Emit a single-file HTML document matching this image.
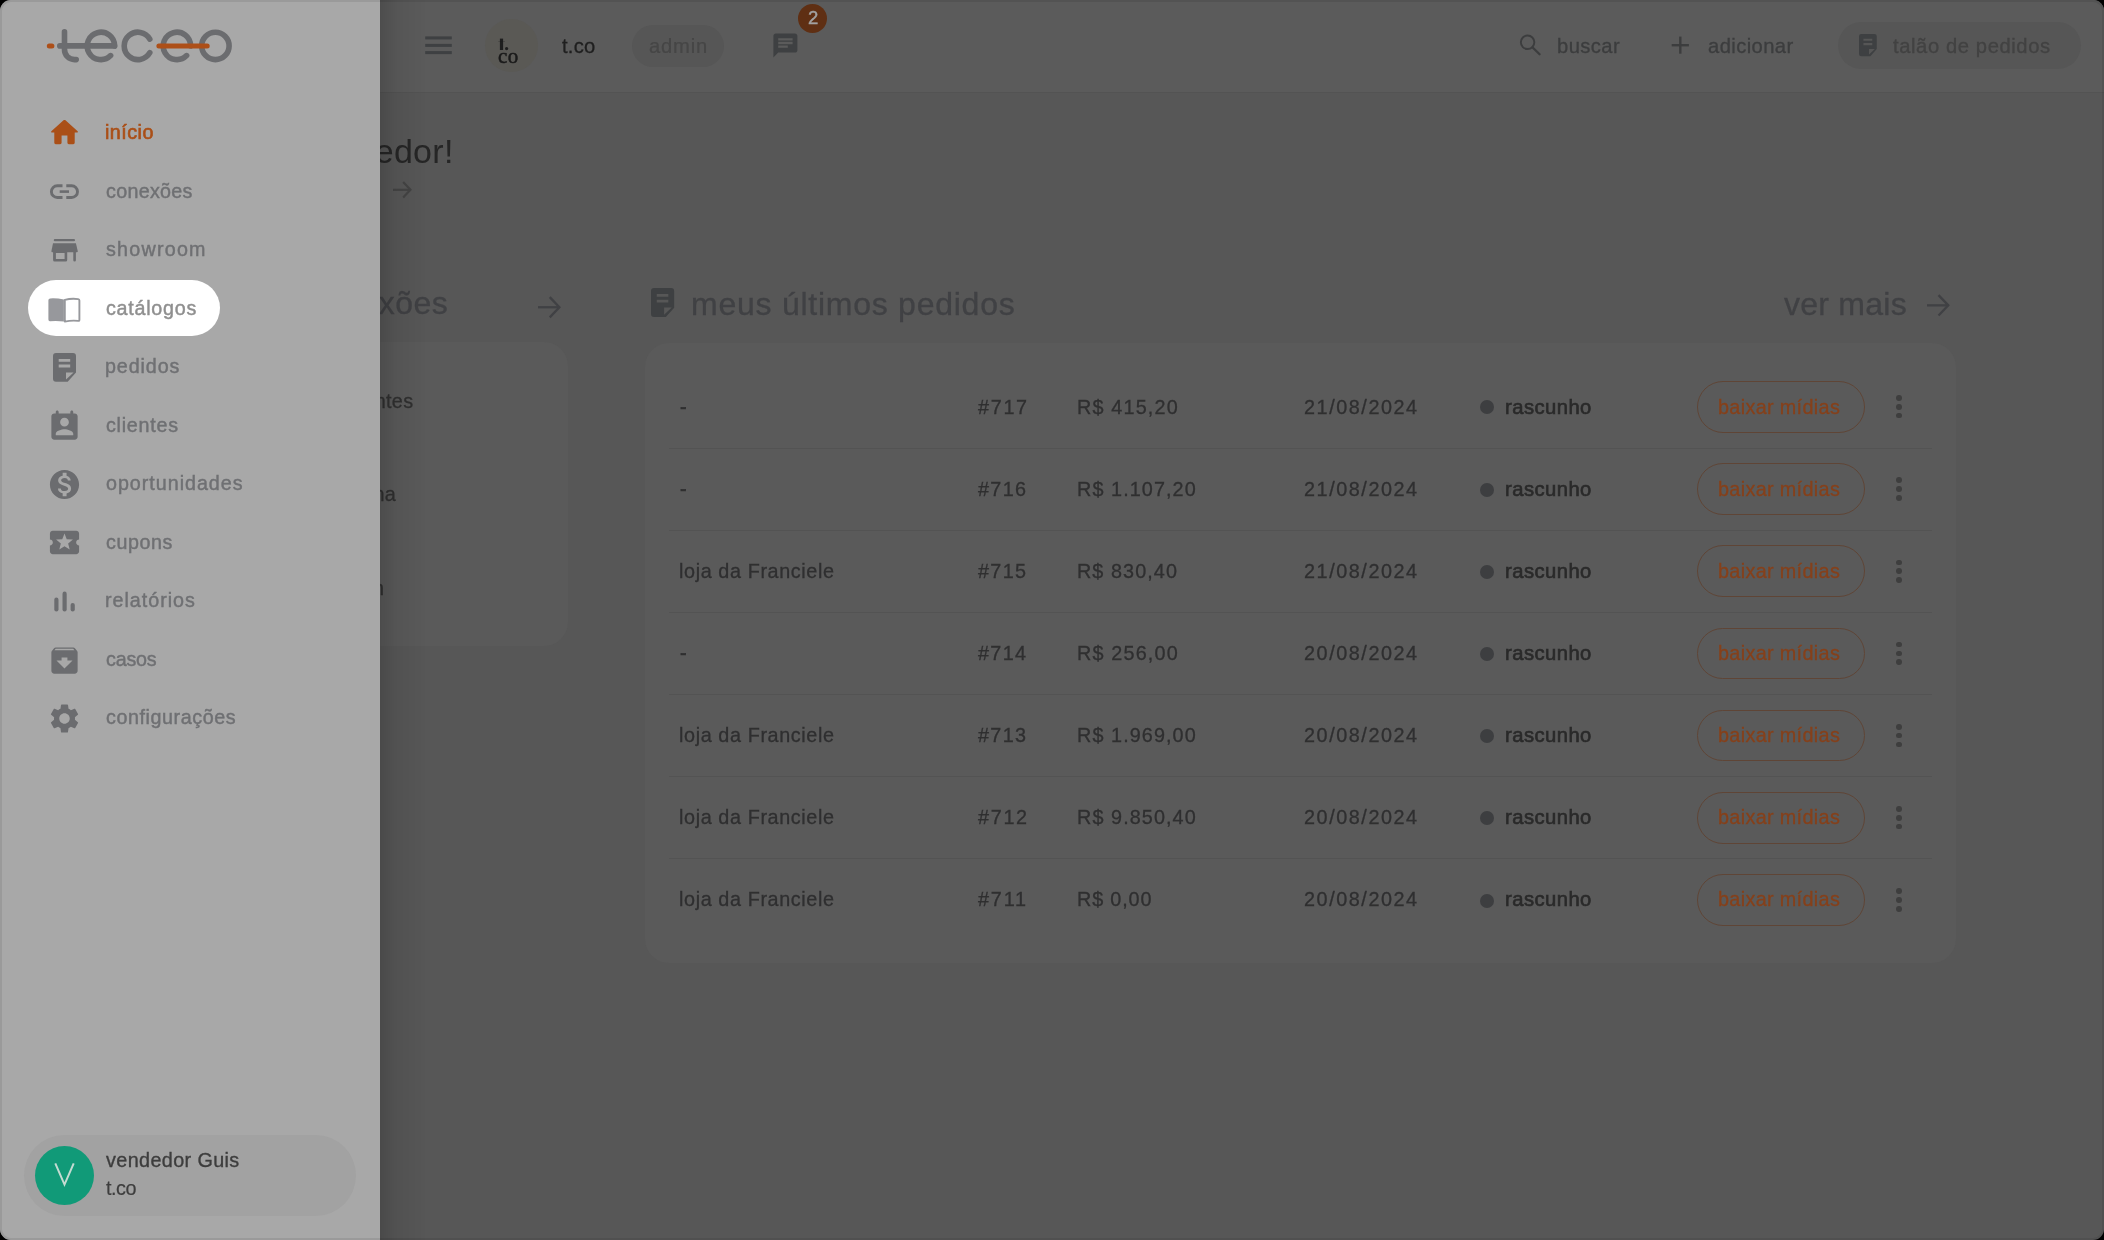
<!DOCTYPE html>
<html><head><meta charset="utf-8"><title>teceo</title>
<style>
*{box-sizing:border-box;margin:0;padding:0}
html,body{width:2104px;height:1240px;overflow:hidden;background:#000;font-family:"Liberation Sans",sans-serif}
#win{position:absolute;left:0;top:0;width:2104px;height:1240px;border-radius:11px;overflow:hidden;background:#575757}
.t{position:absolute;white-space:nowrap;will-change:transform}
.ic{position:absolute;display:block;overflow:visible}
#side{position:absolute;left:0;top:0;width:380px;height:1240px;background:#a8a8a8;z-index:5}
#shadow{position:absolute;left:380px;top:0;width:46px;height:1240px;background:linear-gradient(to right,rgba(0,0,0,.15),rgba(0,0,0,.06) 35%,rgba(0,0,0,0));z-index:4}
#sideC{position:absolute;left:0;top:0;width:380px;height:1240px;z-index:8}
#spot{position:absolute;left:28px;top:280px;width:192px;height:56px;border-radius:28px;background:#fff}
#user{position:absolute;left:23.5px;top:1134.7px;width:332.5px;height:81.8px;border-radius:41px;background:#a2a2a2}
#av{position:absolute;left:35px;top:1146px;width:59px;height:59px;border-radius:50%;background:#119a78}
#hdr{position:absolute;left:380px;top:0;width:1724px;height:93px;background:#5b5b5b;border-bottom:1px solid #535353}
.chip{position:absolute;background:#565656}
#avatar{position:absolute;left:485.1px;top:18.6px;width:53.4px;height:53.4px;border-radius:50%;background:#5a5955}
#badge{position:absolute;left:797.8px;top:4.2px;width:29.2px;height:29.2px;border-radius:50%;background:#5f2f13}
.card{position:absolute;background:#5a5a5a;border-radius:24px}
.dot{position:absolute;width:14px;height:14px;border-radius:50%;background:#3d3e40}
.btn{position:absolute;left:1696.5px;width:168.1px;height:51.7px;border:1.3px solid #5f4536;border-radius:26px}
.mv{position:absolute;width:5.8px;height:5.8px;border-radius:50%;background:#3e3e3e}
.div{position:absolute;left:669px;width:1263px;height:1px;background:#535353}
#wb{position:absolute;left:0;top:0;width:2104px;height:1240px;border-radius:11px;border:2px solid rgba(0,0,0,.08);z-index:50;pointer-events:none}
</style></head><body>
<div id="win">
<div id="hdr"></div>
<div class="chip" style="left:631.5px;top:24.6px;width:92.5px;height:42.4px;border-radius:21.2px"></div>
<div class="chip" style="left:1837.5px;top:21.9px;width:243px;height:46.8px;border-radius:23.4px"></div>
<div id="avatar"></div>
<div id="badge"></div>
<svg class="ic" style="left:425px;top:36px;width:27px;height:19px" viewBox="425 36 27 19"><g fill="#3e4042"><rect x="425.2" y="36.4" width="26.6" height="3"/><rect x="425.2" y="43.9" width="26.6" height="3"/><rect x="425.2" y="51.1" width="26.6" height="3"/></g></svg><svg class="ic" style="left:495px;top:36px;width:15px;height:16px" viewBox="495 36 15 16"><g fill="#1e1e1e"><rect x="499.9" y="38.6" width="3.2" height="11.4"/><rect x="498.2" y="41.3" width="6.8" height="0.7" opacity=".35"/><circle cx="506.6" cy="48.6" r="1.6"/></g></svg><svg class="ic" style="left:771.40px;top:30.90px;width:28.8px;height:28.8px" viewBox="0 0 24 24"><path fill="#3e4042" d="M20 2H4c-1.1 0-1.99.9-1.99 2L2 22l4-4h14c1.1 0 2-.9 2-2V4c0-1.1-.9-2-2-2zM6 9h12v2H6V9zm8 5H6v-2h8v2zm4-6H6V6h12v2z"/></svg><svg class="ic" style="left:1515px;top:30px;width:30px;height:30px" viewBox="1515 30 30 30"><g fill="none" stroke="#3c3d3e"><circle cx="1527.6" cy="42.3" r="6.75" stroke-width="1.9"/><path d="M1532.4 47.3L1539.6 54.3" stroke-width="2.3" stroke-linecap="round"/></g></svg><svg class="ic" style="left:1668px;top:33px;width:25px;height:25px" viewBox="1668 33 25 25"><g fill="#3c3d3e"><rect x="1671.7" y="44.0" width="17.2" height="2.4"/><rect x="1679.1" y="36.6" width="2.4" height="17.1"/></g></svg><svg class="ic" style="left:1859.00px;top:34.30px;width:17.76px;height:22.23px" viewBox="0 0 23 28.8"><path fill="#3e4042" fill-rule="evenodd" d="M3 0H20Q23 0 23 3V19.5L14.7 28.8H3Q0 28.8 0 25.8V3Q0 0 3 0Z M13 19.4H20.6L13 26.5Z M5.7 6H17.2V8.8H5.7Z M5.7 11.6H17.2V14.5H5.7Z"/></svg>
<div class="card" style="left:200px;top:342.3px;width:367.5px;height:304.1px"></div>
<div class="card" style="left:644.5px;top:342.8px;width:1311.3px;height:620px"></div>
<div class="dot" style="left:1479.7px;top:400.3px"></div><div class="btn" style="top:381.0px"></div><div class="mv" style="left:1895.9px;top:395.1px"></div><div class="mv" style="left:1895.9px;top:403.9px"></div><div class="mv" style="left:1895.9px;top:412.7px"></div><div class="div" style="top:448px"></div><div class="dot" style="left:1479.7px;top:482.5px"></div><div class="btn" style="top:463.2px"></div><div class="mv" style="left:1895.9px;top:477.3px"></div><div class="mv" style="left:1895.9px;top:486.1px"></div><div class="mv" style="left:1895.9px;top:494.9px"></div><div class="div" style="top:530px"></div><div class="dot" style="left:1479.7px;top:564.7px"></div><div class="btn" style="top:545.4px"></div><div class="mv" style="left:1895.9px;top:559.5px"></div><div class="mv" style="left:1895.9px;top:568.3px"></div><div class="mv" style="left:1895.9px;top:577.1px"></div><div class="div" style="top:612px"></div><div class="dot" style="left:1479.7px;top:646.9px"></div><div class="btn" style="top:627.6px"></div><div class="mv" style="left:1895.9px;top:641.7px"></div><div class="mv" style="left:1895.9px;top:650.5px"></div><div class="mv" style="left:1895.9px;top:659.3px"></div><div class="div" style="top:694px"></div><div class="dot" style="left:1479.7px;top:729.1px"></div><div class="btn" style="top:709.8px"></div><div class="mv" style="left:1895.9px;top:723.9px"></div><div class="mv" style="left:1895.9px;top:732.7px"></div><div class="mv" style="left:1895.9px;top:741.5px"></div><div class="div" style="top:776px"></div><div class="dot" style="left:1479.7px;top:811.3px"></div><div class="btn" style="top:792.0px"></div><div class="mv" style="left:1895.9px;top:806.1px"></div><div class="mv" style="left:1895.9px;top:814.9px"></div><div class="mv" style="left:1895.9px;top:823.7px"></div><div class="div" style="top:858px"></div><div class="dot" style="left:1479.7px;top:893.5px"></div><div class="btn" style="top:874.2px"></div><div class="mv" style="left:1895.9px;top:888.3px"></div><div class="mv" style="left:1895.9px;top:897.1px"></div><div class="mv" style="left:1895.9px;top:905.9px"></div>
<svg class="ic" style="left:391.00px;top:179.20px;width:23.00px;height:21.70px" viewBox="-2 -2 23.00 21.70"><g fill="none" stroke="#444444" stroke-width="2.2" stroke-linecap="butt" stroke-linejoin="miter"><path d="M0 8.85H17.68"/><path d="M10.15 1.10L17.46 8.85L10.15 16.60"/></g></svg><svg class="ic" style="left:536.00px;top:294.00px;width:27.00px;height:26.50px" viewBox="-2 -2 27.00 26.50"><g fill="none" stroke="#404144" stroke-width="2.3" stroke-linecap="butt" stroke-linejoin="miter"><path d="M0 11.25H21.62"/><path d="M11.75 1.15L21.39 11.25L11.75 21.35"/></g></svg><svg class="ic" style="left:1924.80px;top:292.30px;width:26.90px;height:26.70px" viewBox="-2 -2 26.90 26.70"><g fill="none" stroke="#404144" stroke-width="2.3" stroke-linecap="butt" stroke-linejoin="miter"><path d="M0 11.35H21.52"/><path d="M11.55 1.15L21.29 11.35L11.55 21.55"/></g></svg><svg class="ic" style="left:651.00px;top:288.30px;width:23.16px;height:29.00px" viewBox="0 0 23 28.8"><path fill="#3e4042" fill-rule="evenodd" d="M3 0H20Q23 0 23 3V19.5L14.7 28.8H3Q0 28.8 0 25.8V3Q0 0 3 0Z M13 19.4H20.6L13 26.5Z M5.7 6H17.2V8.8H5.7Z M5.7 11.6H17.2V14.5H5.7Z"/></svg>
<div class="t" style="left:561.50px;top:36.00px;font-size:20.2px;line-height:20.2px;color:#1f1f1f;letter-spacing:0.230px;-webkit-text-stroke:0.3px #1f1f1f;">t.co</div><div class="t" style="left:648.80px;top:36.20px;font-size:20.2px;line-height:20.2px;color:#464646;letter-spacing:0.811px;-webkit-text-stroke:0.2px #464646;">admin</div><div class="t" style="left:1556.80px;top:36.10px;font-size:20.2px;line-height:20.2px;color:#3c3d3e;letter-spacing:0.426px;-webkit-text-stroke:0.3px #3c3d3e;">buscar</div><div class="t" style="left:1707.50px;top:36.10px;font-size:20.2px;line-height:20.2px;color:#3c3d3e;letter-spacing:0.412px;-webkit-text-stroke:0.3px #3c3d3e;">adicionar</div><div class="t" style="left:1893.00px;top:36.30px;font-size:20.2px;line-height:20.2px;color:#424242;letter-spacing:0.595px;-webkit-text-stroke:0.3px #424242;">talão de pedidos</div><div class="t" style="left:807.90px;top:9.44px;font-size:18.5px;line-height:18.5px;color:#a2a2a2;letter-spacing:0.000px;-webkit-text-stroke:0.45px #a2a2a2;z-index:3;">2</div><div class="t" style="left:498.10px;top:45.61px;font-size:21px;line-height:21px;color:#1a1a1a;letter-spacing:0.379px;font-family:'Liberation Serif',serif;-webkit-text-stroke:0.5px #1a1a1a;z-index:3;">co</div><div class="t" style="left:234.46px;top:133.61px;font-size:34px;line-height:34px;color:#262626;letter-spacing:0.300px;">olá, vendedor!</div><div class="t" style="left:193.37px;top:287.41px;font-size:32px;line-height:32px;color:#404144;letter-spacing:0.400px;-webkit-text-stroke:0.3px #404144;">minhas conexões</div><div class="t" style="left:690.80px;top:288.21px;font-size:32px;line-height:32px;color:#404144;letter-spacing:0.748px;-webkit-text-stroke:0.3px #404144;">meus últimos pedidos</div><div class="t" style="left:1784.30px;top:288.11px;font-size:32px;line-height:32px;color:#404144;letter-spacing:0.256px;-webkit-text-stroke:0.3px #404144;">ver mais</div><div class="t" style="left:243.23px;top:391.94px;font-size:19.8px;line-height:19.8px;color:#303030;letter-spacing:0.300px;-webkit-text-stroke:0.3px #303030;">clientes pendentes</div><div class="t" style="left:287.13px;top:485.24px;font-size:19.8px;line-height:19.8px;color:#303030;letter-spacing:0.300px;-webkit-text-stroke:0.3px #303030;">rede interna</div><div class="t" style="left:340.81px;top:578.94px;font-size:19.8px;line-height:19.8px;color:#303030;letter-spacing:0.300px;-webkit-text-stroke:0.3px #303030;">login</div><div class="t" style="left:680.00px;top:397.64px;font-size:19.8px;line-height:19.8px;color:#2f2f30;letter-spacing:0.000px;-webkit-text-stroke:0.6px #2f2f30;">-</div><div class="t" style="left:977.90px;top:397.64px;font-size:19.8px;line-height:19.8px;color:#2f2f30;letter-spacing:1.699px;-webkit-text-stroke:0.3px #2f2f30;">#717</div><div class="t" style="left:1077.30px;top:397.64px;font-size:19.8px;line-height:19.8px;color:#2f2f30;letter-spacing:1.177px;-webkit-text-stroke:0.3px #2f2f30;">R$ 415,20</div><div class="t" style="left:1303.50px;top:397.64px;font-size:19.8px;line-height:19.8px;color:#2f2f30;letter-spacing:1.567px;-webkit-text-stroke:0.3px #2f2f30;">21/08/2024</div><div class="t" style="left:1504.70px;top:397.00px;font-size:20.2px;line-height:20.2px;color:#2a2a2a;letter-spacing:0.469px;-webkit-text-stroke:0.65px #2a2a2a;">rascunho</div><div class="t" style="left:1718.30px;top:397.84px;font-size:19.8px;line-height:19.8px;color:#86401a;letter-spacing:0.346px;-webkit-text-stroke:0.3px #86401a;">baixar mídias</div><div class="t" style="left:680.00px;top:479.64px;font-size:19.8px;line-height:19.8px;color:#2f2f30;letter-spacing:0.000px;-webkit-text-stroke:0.6px #2f2f30;">-</div><div class="t" style="left:977.90px;top:479.64px;font-size:19.8px;line-height:19.8px;color:#2f2f30;letter-spacing:1.365px;-webkit-text-stroke:0.3px #2f2f30;">#716</div><div class="t" style="left:1077.30px;top:479.64px;font-size:19.8px;line-height:19.8px;color:#2f2f30;letter-spacing:1.092px;-webkit-text-stroke:0.3px #2f2f30;">R$ 1.107,20</div><div class="t" style="left:1303.50px;top:479.64px;font-size:19.8px;line-height:19.8px;color:#2f2f30;letter-spacing:1.567px;-webkit-text-stroke:0.3px #2f2f30;">21/08/2024</div><div class="t" style="left:1504.70px;top:479.00px;font-size:20.2px;line-height:20.2px;color:#2a2a2a;letter-spacing:0.469px;-webkit-text-stroke:0.65px #2a2a2a;">rascunho</div><div class="t" style="left:1718.30px;top:479.84px;font-size:19.8px;line-height:19.8px;color:#86401a;letter-spacing:0.346px;-webkit-text-stroke:0.3px #86401a;">baixar mídias</div><div class="t" style="left:679.00px;top:561.64px;font-size:19.8px;line-height:19.8px;color:#2f2f30;letter-spacing:0.616px;-webkit-text-stroke:0.3px #2f2f30;">loja da Franciele</div><div class="t" style="left:977.90px;top:561.64px;font-size:19.8px;line-height:19.8px;color:#2f2f30;letter-spacing:1.365px;-webkit-text-stroke:0.3px #2f2f30;">#715</div><div class="t" style="left:1077.30px;top:561.64px;font-size:19.8px;line-height:19.8px;color:#2f2f30;letter-spacing:1.077px;-webkit-text-stroke:0.3px #2f2f30;">R$ 830,40</div><div class="t" style="left:1303.50px;top:561.64px;font-size:19.8px;line-height:19.8px;color:#2f2f30;letter-spacing:1.567px;-webkit-text-stroke:0.3px #2f2f30;">21/08/2024</div><div class="t" style="left:1504.70px;top:561.00px;font-size:20.2px;line-height:20.2px;color:#2a2a2a;letter-spacing:0.469px;-webkit-text-stroke:0.65px #2a2a2a;">rascunho</div><div class="t" style="left:1718.30px;top:561.84px;font-size:19.8px;line-height:19.8px;color:#86401a;letter-spacing:0.346px;-webkit-text-stroke:0.3px #86401a;">baixar mídias</div><div class="t" style="left:680.00px;top:643.64px;font-size:19.8px;line-height:19.8px;color:#2f2f30;letter-spacing:0.000px;-webkit-text-stroke:0.6px #2f2f30;">-</div><div class="t" style="left:977.90px;top:643.64px;font-size:19.8px;line-height:19.8px;color:#2f2f30;letter-spacing:1.365px;-webkit-text-stroke:0.3px #2f2f30;">#714</div><div class="t" style="left:1077.30px;top:643.64px;font-size:19.8px;line-height:19.8px;color:#2f2f30;letter-spacing:1.177px;-webkit-text-stroke:0.3px #2f2f30;">R$ 256,00</div><div class="t" style="left:1303.50px;top:643.64px;font-size:19.8px;line-height:19.8px;color:#2f2f30;letter-spacing:1.567px;-webkit-text-stroke:0.3px #2f2f30;">20/08/2024</div><div class="t" style="left:1504.70px;top:643.00px;font-size:20.2px;line-height:20.2px;color:#2a2a2a;letter-spacing:0.469px;-webkit-text-stroke:0.65px #2a2a2a;">rascunho</div><div class="t" style="left:1718.30px;top:643.84px;font-size:19.8px;line-height:19.8px;color:#86401a;letter-spacing:0.346px;-webkit-text-stroke:0.3px #86401a;">baixar mídias</div><div class="t" style="left:679.00px;top:725.64px;font-size:19.8px;line-height:19.8px;color:#2f2f30;letter-spacing:0.616px;-webkit-text-stroke:0.3px #2f2f30;">loja da Franciele</div><div class="t" style="left:977.90px;top:725.64px;font-size:19.8px;line-height:19.8px;color:#2f2f30;letter-spacing:1.365px;-webkit-text-stroke:0.3px #2f2f30;">#713</div><div class="t" style="left:1077.30px;top:725.64px;font-size:19.8px;line-height:19.8px;color:#2f2f30;letter-spacing:1.092px;-webkit-text-stroke:0.3px #2f2f30;">R$ 1.969,00</div><div class="t" style="left:1303.50px;top:725.64px;font-size:19.8px;line-height:19.8px;color:#2f2f30;letter-spacing:1.567px;-webkit-text-stroke:0.3px #2f2f30;">20/08/2024</div><div class="t" style="left:1504.70px;top:725.00px;font-size:20.2px;line-height:20.2px;color:#2a2a2a;letter-spacing:0.469px;-webkit-text-stroke:0.65px #2a2a2a;">rascunho</div><div class="t" style="left:1718.30px;top:725.84px;font-size:19.8px;line-height:19.8px;color:#86401a;letter-spacing:0.346px;-webkit-text-stroke:0.3px #86401a;">baixar mídias</div><div class="t" style="left:679.00px;top:807.64px;font-size:19.8px;line-height:19.8px;color:#2f2f30;letter-spacing:0.616px;-webkit-text-stroke:0.3px #2f2f30;">loja da Franciele</div><div class="t" style="left:977.90px;top:807.64px;font-size:19.8px;line-height:19.8px;color:#2f2f30;letter-spacing:1.699px;-webkit-text-stroke:0.3px #2f2f30;">#712</div><div class="t" style="left:1077.30px;top:807.64px;font-size:19.8px;line-height:19.8px;color:#2f2f30;letter-spacing:1.092px;-webkit-text-stroke:0.3px #2f2f30;">R$ 9.850,40</div><div class="t" style="left:1303.50px;top:807.64px;font-size:19.8px;line-height:19.8px;color:#2f2f30;letter-spacing:1.567px;-webkit-text-stroke:0.3px #2f2f30;">20/08/2024</div><div class="t" style="left:1504.70px;top:807.00px;font-size:20.2px;line-height:20.2px;color:#2a2a2a;letter-spacing:0.469px;-webkit-text-stroke:0.65px #2a2a2a;">rascunho</div><div class="t" style="left:1718.30px;top:807.84px;font-size:19.8px;line-height:19.8px;color:#86401a;letter-spacing:0.346px;-webkit-text-stroke:0.3px #86401a;">baixar mídias</div><div class="t" style="left:679.00px;top:889.64px;font-size:19.8px;line-height:19.8px;color:#2f2f30;letter-spacing:0.616px;-webkit-text-stroke:0.3px #2f2f30;">loja da Franciele</div><div class="t" style="left:977.90px;top:889.64px;font-size:19.8px;line-height:19.8px;color:#2f2f30;letter-spacing:1.855px;-webkit-text-stroke:0.3px #2f2f30;">#711</div><div class="t" style="left:1077.30px;top:889.64px;font-size:19.8px;line-height:19.8px;color:#2f2f30;letter-spacing:0.853px;-webkit-text-stroke:0.3px #2f2f30;">R$ 0,00</div><div class="t" style="left:1303.50px;top:889.64px;font-size:19.8px;line-height:19.8px;color:#2f2f30;letter-spacing:1.567px;-webkit-text-stroke:0.3px #2f2f30;">20/08/2024</div><div class="t" style="left:1504.70px;top:889.00px;font-size:20.2px;line-height:20.2px;color:#2a2a2a;letter-spacing:0.469px;-webkit-text-stroke:0.65px #2a2a2a;">rascunho</div><div class="t" style="left:1718.30px;top:889.84px;font-size:19.8px;line-height:19.8px;color:#86401a;letter-spacing:0.346px;-webkit-text-stroke:0.3px #86401a;">baixar mídias</div>
<div id="shadow"></div>
<div id="side"></div>
<div id="sideC">
<div id="spot"></div>
<div id="user"></div>
<div id="av"></div>
<svg class="ic" style="left:0;top:0;width:260px;height:80px;z-index:8" viewBox="0 0 260 80"><g fill="none" stroke="#6b6c6f" stroke-width="5.6" stroke-linecap="round"><path d="M64.5 31.8V49.5A10 10 0 0 0 74.5 59.6H76.2"/><path d="M59.8 45.9H114.5"/><path d="M114.6 45.9A13.7 13.7 0 1 0 110.6 55.6"/><path d="M149.8 39.1A13.7 13.7 0 1 0 149.8 52.7"/><path d="M190.6 45.9A13.7 13.7 0 1 0 186.6 55.6"/><circle cx="215.4" cy="45.9" r="13.7"/></g><g fill="none" stroke="#ad4f18" stroke-width="5" stroke-linecap="round"><path d="M49.3 45.9H51.9"/><path d="M158.9 45.9H207.2"/></g></svg>
<svg class="ic" style="left:47.10px;top:115.20px;width:35px;height:35px" viewBox="0 0 24 24"><path fill="#aa4f17" d="M10 19v-5h4v5c0 .55.45 1 1 1h3c.55 0 1-.45 1-1v-7h1.7c.46 0 .68-.57.33-.87L12.67 3.6c-.38-.34-.96-.34-1.34 0l-8.36 7.53c-.34.3-.13.87.33.87H5v7c0 .55.45 1 1 1h3c.55 0 1-.45 1-1z"/></svg><svg class="ic" style="left:46px;top:180px;width:36px;height:24px" viewBox="46 180 36 24"><g fill="none" stroke="#6b6c6f" stroke-width="2.9"><path d="M62.5 185.75H57.3A5.9 5.9 0 0 0 57.3 197.55H62.5"/><path d="M66.3 185.75H71.6A5.9 5.9 0 0 1 71.6 197.55H66.3"/></g><rect x="59.7" y="190.3" width="9.3" height="2.6" fill="#6b6c6f"/></svg><svg class="ic" style="left:46px;top:232px;width:38px;height:36px" viewBox="46 232 38 36"><g fill="#6b6c6f"><path d="M54.9 239H73.9A1.15 1.15 0 0 1 73.9 241.3H54.9A1.15 1.15 0 0 1 54.9 239Z"/><path d="M53 243.2H75.9L77.8 251.3Q77.8 252.3 76.8 252.3H52.4Q51.4 252.3 51.4 251.3Z"/><path fill-rule="evenodd" d="M53.1 252H67.2V260.1Q67.2 261.6 65.7 261.6H54.6Q53.1 261.6 53.1 260.1Z M55.9 252.9H64.6V259H55.9Z"/><path d="M73.3 252H75.9V260.3A1.3 1.3 0 0 1 73.3 260.3Z"/></g></svg><svg class="ic" style="left:44px;top:292px;width:42px;height:36px" viewBox="44 292 42 36"><path fill="#97989c" d="M48.4 300.2Q48.4 298.4 50.2 298.4Q57 298 63.9 299.6V321.6Q57 320.4 50.2 321.2Q48.4 321.4 48.4 319.6Z"/><path fill="none" stroke="#97989c" stroke-width="1.9" stroke-linejoin="round" d="M64.8 299.8Q71.5 298.2 78.2 299.1Q79.4 299.3 79.4 300.6V319.8Q79.4 321 78.2 320.9Q71.5 320.2 64.8 321.6Z"/></svg><svg class="ic" style="left:53.00px;top:352.90px;width:23.00px;height:28.80px" viewBox="0 0 23 28.8"><path fill="#6b6c6f" fill-rule="evenodd" d="M3 0H20Q23 0 23 3V19.5L14.7 28.8H3Q0 28.8 0 25.8V3Q0 0 3 0Z M13 19.4H20.6L13 26.5Z M5.7 6H17.2V8.8H5.7Z M5.7 11.6H17.2V14.5H5.7Z"/></svg><svg class="ic" style="left:47.10px;top:408.50px;width:35px;height:35px" viewBox="0 0 24 24"><path fill="#6b6c6f" d="M19 3h-1V2c0-.55-.45-1-1-1s-1 .45-1 1v1H8V2c0-.55-.45-1-1-1s-1 .45-1 1v1H5c-1.11 0-2 .9-2 2v14c0 1.1.89 2 2 2h14c1.1 0 2-.9 2-2V5c0-1.1-.9-2-2-2zm-7 3c1.65 0 3 1.35 3 3s-1.35 3-3 3-3-1.35-3-3 1.35-3 3-3zm6 12H6v-1c0-2 4-3.1 6-3.1s6 1.1 6 3.1v1z"/></svg><svg class="ic" style="left:47.00px;top:466.50px;width:35px;height:35px" viewBox="0 0 24 24"><path fill="#6b6c6f" d="M12 2C6.48 2 2 6.48 2 12s4.48 10 10 10 10-4.48 10-10S17.52 2 12 2zm1.41 16.09V20h-2.67v-1.93c-1.71-.36-3.16-1.46-3.27-3.4h1.96c.1 1.05.82 1.87 2.65 1.87 1.96 0 2.4-.98 2.4-1.59 0-.83-.44-1.61-2.67-2.14-2.48-.6-4.18-1.62-4.18-3.67 0-1.72 1.39-2.84 3.11-3.21V4h2.67v1.95c1.86.45 2.79 1.86 2.85 3.39H14.3c-.05-1.11-.64-1.87-2.22-1.87-1.5 0-2.4.68-2.4 1.64 0 .84.65 1.39 2.67 1.91s4.18 1.39 4.18 3.91c-.01 1.83-1.38 2.83-3.12 3.16z"/></svg><svg class="ic" style="left:47.00px;top:525.00px;width:35px;height:35px" viewBox="0 0 24 24"><path fill="#6b6c6f" d="M20 12c0-1.1.9-2 2-2V6c0-1.1-.9-2-2-2H4c-1.1 0-1.99.9-1.99 2v4c1.1 0 1.99.9 1.99 2s-.89 2-2 2v4c0 1.1.9 2 2 2h16c1.1 0 2-.9 2-2v-4c-1.1 0-2-.9-2-2zm-4.42 4.8L12 14.5l-3.58 2.3 1.08-4.12-3.29-2.69 4.24-.25L12 5.8l1.54 3.95 4.24.25-3.29 2.69 1.09 4.11z"/></svg><svg class="ic" style="left:50px;top:588px;width:30px;height:26px" viewBox="50 588 30 26"><g fill="#6b6c6f"><rect x="54.3" y="597.6" width="4.2" height="14" rx="2.1"/><rect x="62.5" y="591.6" width="4.2" height="20" rx="2.1"/><rect x="70.6" y="603" width="4.2" height="8.6" rx="2.1"/></g></svg><svg class="ic" style="left:47.00px;top:642.50px;width:35px;height:35px" viewBox="0 0 24 24"><path fill="#6b6c6f" d="M20.54 5.23l-1.39-1.68C18.88 3.21 18.47 3 18 3H6c-.47 0-.88.21-1.16.55L3.46 5.23C3.17 5.57 3 6.02 3 6.5V19c0 1.1.9 2 2 2h14c1.1 0 2-.9 2-2V6.5c0-.48-.17-.93-.46-1.27zM12 17.5L6.5 12H10v-2h4v2h3.5L12 17.5zM5.12 5l.81-1h12l.94 1H5.12z"/></svg><svg class="ic" style="left:47.00px;top:701.00px;width:35px;height:35px" viewBox="0 0 24 24"><path fill="#6b6c6f" d="M19.14 12.94c.04-.3.06-.61.06-.94 0-.32-.02-.64-.07-.94l2.03-1.58c.18-.14.23-.41.12-.61l-1.92-3.32c-.12-.22-.37-.29-.59-.22l-2.39.96c-.5-.38-1.03-.7-1.62-.94l-.36-2.54c-.04-.24-.24-.41-.48-.41h-3.84c-.24 0-.43.17-.47.41l-.36 2.54c-.59.24-1.13.57-1.62.94l-2.39-.96c-.22-.08-.47 0-.59.22L2.74 8.87c-.12.21-.08.47.12.61l2.03 1.58c-.05.3-.09.63-.09.94s.02.64.07.94l-2.03 1.58c-.18.14-.23.41-.12.61l1.92 3.32c.12.22.37.29.59.22l2.39-.96c.5.38 1.03.7 1.62.94l.36 2.54c.05.24.24.41.48.41h3.84c.24 0 .44-.17.47-.41l.36-2.54c.59-.24 1.13-.56 1.62-.94l2.39.96c.22.08.47 0 .59-.22l1.92-3.32c.12-.22.07-.47-.12-.61l-2.01-1.58zM12 15.6c-1.98 0-3.6-1.62-3.6-3.6s1.62-3.6 3.6-3.6 3.6 1.62 3.6 3.6-1.62 3.6-3.6 3.6z"/></svg>
<div class="t" style="left:105.40px;top:123.22px;font-size:19.7px;line-height:19.7px;color:#aa4f17;letter-spacing:0.478px;-webkit-text-stroke:0.65px #aa4f17;z-index:8;">início</div><div class="t" style="left:106.40px;top:181.72px;font-size:19.7px;line-height:19.7px;color:#6f7073;letter-spacing:0.309px;-webkit-text-stroke:0.45px #6f7073;z-index:8;">conexões</div><div class="t" style="left:106.40px;top:240.22px;font-size:19.7px;line-height:19.7px;color:#6f7073;letter-spacing:1.241px;-webkit-text-stroke:0.45px #6f7073;z-index:8;">showroom</div><div class="t" style="left:106.40px;top:298.72px;font-size:19.7px;line-height:19.7px;color:#8f8f8f;letter-spacing:0.746px;-webkit-text-stroke:0.45px #8f8f8f;z-index:8;">catálogos</div><div class="t" style="left:105.40px;top:357.22px;font-size:19.7px;line-height:19.7px;color:#6f7073;letter-spacing:0.897px;-webkit-text-stroke:0.45px #6f7073;z-index:8;">pedidos</div><div class="t" style="left:106.40px;top:415.72px;font-size:19.7px;line-height:19.7px;color:#6f7073;letter-spacing:0.756px;-webkit-text-stroke:0.45px #6f7073;z-index:8;">clientes</div><div class="t" style="left:106.40px;top:474.22px;font-size:19.7px;line-height:19.7px;color:#6f7073;letter-spacing:0.980px;-webkit-text-stroke:0.45px #6f7073;z-index:8;">oportunidades</div><div class="t" style="left:106.40px;top:532.72px;font-size:19.7px;line-height:19.7px;color:#6f7073;letter-spacing:0.592px;-webkit-text-stroke:0.45px #6f7073;z-index:8;">cupons</div><div class="t" style="left:105.40px;top:591.22px;font-size:19.7px;line-height:19.7px;color:#6f7073;letter-spacing:0.986px;-webkit-text-stroke:0.45px #6f7073;z-index:8;">relatórios</div><div class="t" style="left:106.40px;top:649.72px;font-size:19.7px;line-height:19.7px;color:#6f7073;letter-spacing:-0.196px;-webkit-text-stroke:0.45px #6f7073;z-index:8;">casos</div><div class="t" style="left:106.40px;top:708.22px;font-size:19.7px;line-height:19.7px;color:#6f7073;letter-spacing:0.589px;-webkit-text-stroke:0.45px #6f7073;z-index:8;">configurações</div><div class="t" style="left:105.90px;top:1151.14px;font-size:19.8px;line-height:19.8px;color:#3d3d3d;letter-spacing:0.378px;-webkit-text-stroke:0.35px #3d3d3d;z-index:8;">vendedor Guis</div><div class="t" style="left:106.00px;top:1179.24px;font-size:19.8px;line-height:19.8px;color:#3d3d3d;letter-spacing:-0.461px;-webkit-text-stroke:0.2px #3d3d3d;z-index:8;">t.co</div>
<svg class="ic" style="left:35px;top:1146px;width:59px;height:59px" viewBox="0 0 59 59"><path d="M20.3 17.4L29.5 38.6L38.7 17.4" fill="none" stroke="#c4dbd2" stroke-width="2.0" stroke-linecap="butt" stroke-linejoin="miter"/></svg>
</div>
<div id="wb"></div>
</div>
</body></html>
